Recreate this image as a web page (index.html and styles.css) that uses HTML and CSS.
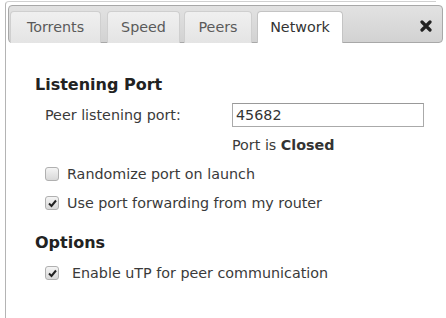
FILE: index.html
```html
<!DOCTYPE html>
<html>
<head>
<meta charset="utf-8">
<link rel="stylesheet" href="styles.css">
</head>
<body>
<div class="dialog">
  <div class="tabbar">
    <div class="tabs">
      <div class="tab t1">Torrents</div>
      <div class="tab t2">Speed</div>
      <div class="tab t3">Peers</div>
      <div class="tab t4 active">Network</div>
    </div>
    <div class="close">
      <svg width="12" height="12" viewBox="0 0 12 12"><path d="M2 2 L10 10 M10 2 L2 10" stroke="#222" stroke-width="3.2" stroke-linecap="round"/></svg>
    </div>
  </div>
  <div class="content">
    <h2 class="heading">Listening Port</h2>
    <div class="port-row">
      <span class="label">Peer listening port:</span>
      <div class="field">45682</div>
    </div>
    <div class="status">Port is <b>Closed</b></div>
    <div class="check-row">
      <span class="box"></span>
      <span>Randomize port on launch</span>
    </div>
    <div class="check-row">
      <span class="box checked"><svg width="11" height="11" viewBox="0 0 11 11"><path d="M2 5.5 L4.5 8 L9 2.5" fill="none" stroke="#222" stroke-width="2"/></svg></span>
      <span>Use port forwarding from my router</span>
    </div>
    <h2 class="heading options">Options</h2>
    <div class="check-row wide">
      <span class="box checked"><svg width="11" height="11" viewBox="0 0 11 11"><path d="M2 5.5 L4.5 8 L9 2.5" fill="none" stroke="#222" stroke-width="2"/></svg></span>
      <span>Enable uTP for peer communication</span>
    </div>
  </div>
</div>
</body>
</html>
```
FILE: styles.css
```css
html, body {
  margin: 0;
  padding: 0;
  background: #fff;
}
body {
  font-family: "DejaVu Sans", Verdana, sans-serif;
  font-size: 14.3px;
  color: #3a3a3a;
  overflow: hidden;
  height: 318px;
}
.dialog {
  margin: 1px 0 0 5px;
  width: 430px;
  height: 317px;
  border-left: 1px solid #b4b4b4;
  border-top: 1px solid #d0d0d0;
  border-top-left-radius: 4px;
}
.tabbar {
  margin: 3px 0 0 2px;
  width: 433px;
  height: 36px;
  border: 1px solid #a8a8a8;
  border-radius: 4px;
  background: linear-gradient(#e2e2e2, #d2d2d2);
  display: flex;
  justify-content: space-between;
  align-items: flex-end;
}
.tabs {
  display: flex;
  align-items: flex-end;
  gap: 6px;
  padding-left: 1px;
  margin-bottom: -1px;
}
.tab {
  box-sizing: border-box;
  height: 32px;
  line-height: 31px;
  text-align: center;
  color: #5a5a5a;
  border: 1px solid #cfcfcf;
  border-bottom: none;
  border-radius: 4px 4px 0 0;
  background: linear-gradient(#f0f0f0, #e4e4e4);
}
.t1 { width: 91px; }
.t2 { width: 73px; }
.t3 { width: 68px; margin-left: -2px; }
.t4 { width: 86px; margin-left: -1px; }
.tab.active {
  background: #fff;
  color: #333;
  border-color: #c4c4c4;
}
.close {
  align-self: center;
  margin-right: 10px;
  margin-top: 4px;
  line-height: 0;
}
.content {
  padding: 32px 0 0 29px;
}
.heading {
  margin: 0;
  font-size: 16px;
  line-height: 20px;
  font-weight: bold;
  color: #222;
}
.port-row {
  display: flex;
  align-items: center;
  margin: 8px 0 0 10px;
}
.label {
  width: 187px;
}
.field {
  box-sizing: border-box;
  width: 192px;
  height: 24px;
  border: 1px solid #aaa;
  border-top-color: #999;
  line-height: 22px;
  padding-left: 3px;
  color: #333;
}
.status {
  margin: 8px 0 0 197px;
  line-height: 20px;
}
.status b {
  color: #333;
}
.check-row {
  display: flex;
  align-items: center;
  margin: 9px 0 0 10px;
  line-height: 20px;
}
.box {
  box-sizing: border-box;
  width: 14px;
  height: 14px;
  border: 1px solid #b0b0b0;
  border-radius: 3px;
  background: linear-gradient(#f4f4f4, #d8d8d8);
  margin-right: 8px;
  display: flex;
  align-items: center;
  justify-content: center;
}
.wide .box {
  margin-right: 13px;
}
.heading.options {
  margin-top: 20px;
}
.check-row.wide {
  margin-top: 10px;
}
```
